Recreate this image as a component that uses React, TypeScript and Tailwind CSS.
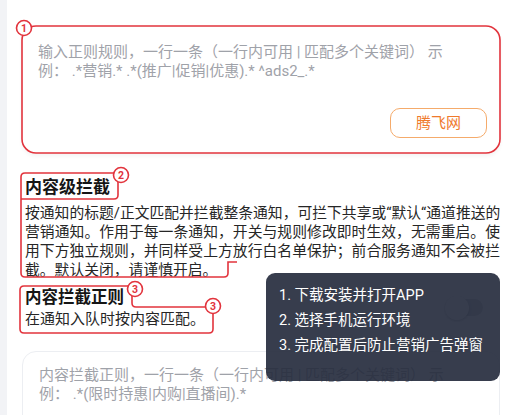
const red = '#e2343d'

function Badge({ x, y, n }: { x: number; y: number; n: number }) {
  return (
    <g>
      <circle cx={x} cy={y} r={7.5} fill="white" stroke={red} strokeWidth={1.6} />
      <text x={x} y={y + 3.8} textAnchor="middle" fontSize="10.5" fontWeight="700" fill={red} fontFamily="Roboto, sans-serif">
        {n}
      </text>
    </g>
  )
}

const paragraph = [
  '按通知的标题/正文匹配并拦截整条通知，可拦下共享或“默认“通道推送的',
  '营销通知。作用于每一条通知，开关与规则修改即时生效，无需重启。使',
  '用下方独立规则，并同样受上方放行白名单保护；前合服务通知不会被拦',
]

export default function App() {
  return (
    <div className="relative h-[415px] w-[513px] overflow-hidden bg-[#f2f3f6] pl-[7px] font-['Roboto','Noto_Sans_CJK_SC',sans-serif]">
      <div className="h-full bg-white pl-[15px] pr-[13px] pt-[26px]">
        {/* rule input */}
        <div className="flex h-[127px] flex-col rounded-[14px] bg-white pb-[15px] pl-4 pr-[13px] pt-[17px] shadow-[0_3px_4px_rgba(0,0,0,0.05)]">
          <p className="text-[15px] leading-[19px] text-[#9fa2a9]">
            输入正则规则，一行一条（一行内可用 | 匹配多个关键词） 示
            <br />
            例： .*营销.* .*(推广|促销|优惠).* ^ads2_.*
          </p>
          <div className="mt-auto flex justify-end">
            <button className="h-[30px] w-[97px] rounded-[10px] border border-[#f5ab6b] text-[15px] text-[#ef7a2c]">
              腾飞网
            </button>
          </div>
        </div>

        <h2 className="mt-[21px] pl-[3px] text-[17px] font-bold leading-[26px] text-[#151515]">内容级拦截</h2>
        <div className="mt-[4px] pl-[3px] text-[14.8px] leading-[19px] text-[#262626]">
          {paragraph.map((line) => (
            <p key={line} className="whitespace-nowrap text-justify [text-align-last:justify]">
              {line}
            </p>
          ))}
          <p>截。默认关闭，请谨慎开启。</p>
        </div>

        <div className="mt-[7px] flex items-center justify-between pl-[3px] pr-[17px]">
          <div>
            <h3 className="text-[16.5px] font-bold leading-[21px] text-[#151515]">内容拦截正则</h3>
            <p className="text-[15px] leading-[23px] text-[#262626]">在通知入队时按内容匹配。</p>
          </div>
          <div className="relative mb-[3px] h-[17px] w-[38px] rounded-full bg-[#c4c6cc]">
            <div className="absolute -top-[3.5px] left-0 h-6 w-6 rounded-full bg-white shadow-[0_1px_3px_rgba(0,0,0,0.35)]" />
          </div>
        </div>

        {/* content rule input */}
        <div className="mt-[20px] h-[90px] rounded-[14px] border border-[#eceef2] bg-white pl-4 pt-[14px]">
          <p className="text-[15px] leading-[19px] text-[#9fa2a9]">
            内容拦截正则，一行一条（一行内可用 | 匹配多个关键词） 示
            <br />
            例： .*(限时持惠|内购|直播间).*
          </p>
        </div>
      </div>

      {/* annotation outlines */}
      <svg className="pointer-events-none absolute inset-0" width={513} height={415} fill="none">
        <rect x={22} y={26} width={478} height={127} rx={14} stroke={red} strokeWidth={1.6} />
        <path
          d="M237 262 H228 V273 Q228 277 224 277 H25 Q21 277 21 273 V177 Q21 173 25 173 H114 Q118 173 118 177 V195 Q118 199 114 199 H21"
          stroke={red}
          strokeWidth={1.6}
        />
        <path
          d="M24 286 H128 Q132 286 132 290 V303 Q132 307 136 307 H209 Q213 307 213 311 V329 Q213 333 209 333 H24 Q20 333 20 329 V290 Q20 286 24 286 Z"
          stroke={red}
          strokeWidth={1.6}
        />
        <Badge x={24} y={28} n={1} />
        <Badge x={121} y={175} n={2} />
        <Badge x={135} y={289} n={3} />
        <Badge x={213} y={306} n={3} />
      </svg>

      {/* guide tooltip */}
      <div className="absolute left-[266px] top-[273px] h-[108px] w-[234px] rounded-[9px] bg-[rgba(38,44,62,0.92)] px-[13px] pt-[10px] text-[14.5px] leading-[25px] text-white">
        <p>1. 下载安装并打开APP</p>
        <p>2. 选择手机运行环境</p>
        <p>3. 完成配置后防止营销广告弹窗</p>
      </div>
    </div>
  )
}
